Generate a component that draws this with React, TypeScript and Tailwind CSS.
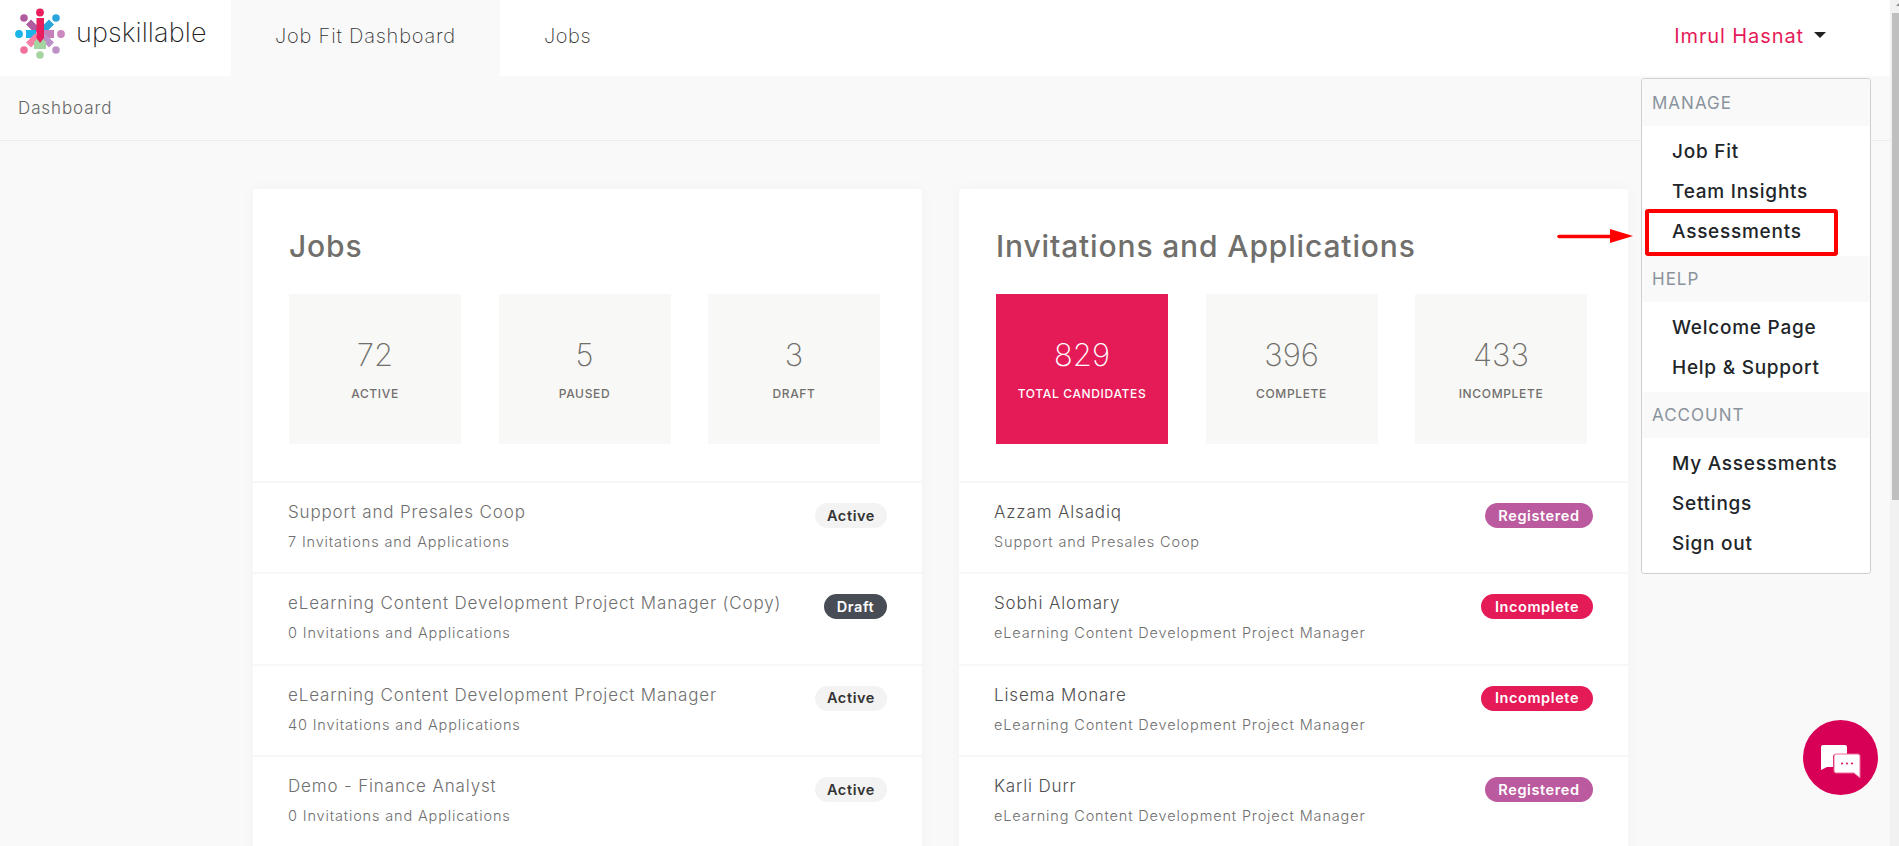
import React from 'react'

const font = { fontFamily: 'Inter, "Open Sans", sans-serif' }

interface RowProps {
  title: string
  sub: string
  badge: string
  dark?: boolean
}

const badgeStyles: Record<string, string> = {
  Active: 'bg-[#f3f3f3] text-[#333333] w-[72px]',
  Draft: 'bg-[#484d55] text-white w-[63px]',
  Registered: 'bg-[#bb5a9e] text-white w-[108px]',
  Incomplete: 'bg-[#e51b58] text-white w-[112px]',
}

const jobs: RowProps[] = [
  { title: 'Support and Presales Coop', sub: '7 Invitations and Applications', badge: 'Active' },
  { title: 'eLearning Content Development Project Manager (Copy)', sub: '0 Invitations and Applications', badge: 'Draft' },
  { title: 'eLearning Content Development Project Manager', sub: '40 Invitations and Applications', badge: 'Active' },
  { title: 'Demo - Finance Analyst', sub: '0 Invitations and Applications', badge: 'Active' },
]

const candidates: RowProps[] = [
  { title: 'Azzam Alsadiq', sub: 'Support and Presales Coop', badge: 'Registered' },
  { title: 'Sobhi Alomary', sub: 'eLearning Content Development Project Manager', badge: 'Incomplete' },
  { title: 'Lisema Monare', sub: 'eLearning Content Development Project Manager', badge: 'Incomplete' },
  { title: 'Karli Durr', sub: 'eLearning Content Development Project Manager', badge: 'Registered' },
]

// coordinates in the viewBox are page pixels
const Logo = () => (
  <svg width="52" height="52" viewBox="14 8 52 52" className="shrink-0">
    <circle cx="24" cy="18" r="3.8" fill="#b05ba0" />
    <circle cx="56" cy="18" r="3.8" fill="#2aa5dc" />
    <circle cx="19" cy="34" r="3.9" fill="#1ab3ea" />
    <circle cx="61" cy="34" r="3.9" fill="#cc88bf" />
    <circle cx="24" cy="50" r="3.8" fill="#f06f9c" />
    <circle cx="56" cy="50" r="3.8" fill="#bd92c8" />
    <circle cx="40" cy="55" r="3.8" fill="#a2d5a0" />
    <path d="M31 19.5L40 28.5L35 33.5L26 24.5z" fill="#b05ba0" />
    <path d="M49 19.5L54 24.5L45 33.5L40 28.5z" fill="#2aa5dc" />
    <path d="M26 30H36V38H26z" fill="#1ab3ea" />
    <path d="M44 30H54V38H44z" fill="#c67fb8" />
    <path d="M31 47.5L26 42.5L35 33.5L40 38.5z" fill="#f67fa6" />
    <path d="M49 47.5L54 42.5L45 33.5L40 38.5z" fill="#bd92c8" />
    <path d="M40 36L46 42V49H34V42z" fill="#a2d5a0" />
    <circle cx="40" cy="12.5" r="3.9" fill="#e91e5e" />
    <path d="M36.5 18H44V38L40 43L36.5 38z" fill="#e91e5e" />
  </svg>
)

const Tile = ({ value, label, active }: { value: string; label: string; active?: boolean }) => (
  <div className={`w-[172px] h-[150px] flex flex-col items-center pt-[45px] ${active ? 'bg-[#e51b58] text-white' : 'bg-[#f8f8f6] text-[#706f6c]'}`}>
    <div className="text-[31px] leading-[32px] font-extralight">{value}</div>
    <div className="mt-[15px] text-[12px] leading-[16px] font-medium tracking-[0.65px]">{label}</div>
  </div>
)

const Row = ({ title, sub, badge, dark }: RowProps) => (
  <div className="h-[91.33px] border-t-2 border-[#f7f7f7] flex justify-between pl-[35px] pr-[35px] pt-[18px]">
    <div>
      <div className={`text-[17px] leading-[22px] font-light tracking-[0.85px] ${dark ? 'text-[#4f4f4f]' : 'text-[#6f6f6f]'}`}>{title}</div>
      <div className="mt-[9px] text-[14.5px] leading-[20px] font-light tracking-[0.85px] text-[#6f6f6f]">{sub}</div>
    </div>
    <div className={`h-[25px] mt-[2px] rounded-full flex items-center justify-center text-[14.5px] font-semibold tracking-[0.6px] ${badgeStyles[badge]}`}>{badge}</div>
  </div>
)

const MenuHead = ({ label, h }: { label: string; h: string }) => (
  <div className={`${h} bg-[#f9f9f9] pl-[10px] pt-[2px] flex items-center text-[17px] font-normal tracking-[1px] text-[#8a939c]`}>{label}</div>
)

const MenuItem = ({ label }: { label: string }) => (
  <div className="h-10 pl-[30px] pt-[2px] flex items-center text-[19px] font-medium tracking-[0.75px] text-[#212529]">{label}</div>
)

export default function App() {
  return (
    <div style={font} className="h-screen flex overflow-hidden bg-[#f9f9f9]">
      <div className="relative flex-1 min-w-0">
        <nav className="h-[76px] bg-white flex">
          <div className="w-[231px] flex items-start pl-[14px] pt-[8px]">
            <Logo />
            <span className="ml-[10px] mt-[9px] text-[27px] leading-[32px] font-extralight tracking-[0.1px] text-[#222222]">upskillable</span>
          </div>
          <div className="w-[269px] bg-[#f9f9f9] flex items-center justify-center pb-[4px] text-[20px] font-extralight tracking-[0.8px] text-[#333333]">Job Fit Dashboard</div>
          <div className="ml-[44px] flex items-center pb-[4px] text-[20px] font-extralight tracking-[0.55px] text-[#333333]">Jobs</div>
          <div className="ml-auto mr-[64px] flex items-center gap-[10px] pb-[4px] text-[#e51b58] text-[20px] font-normal tracking-[0.9px]">
            Imrul Hasnat
            <span className="w-0 h-0 border-x-[6px] border-x-transparent border-t-[6px] border-t-[#222222] -mt-[2px]" />
          </div>
        </nav>
        <div className="h-[65px] border-b border-[#ececec] pl-[18px] pt-[2px] flex items-center text-[17px] font-light tracking-[0.9px] text-[#666666]">Dashboard</div>
        <div className="pl-[253px] pt-[48px] flex gap-[37px]">
          <div className="w-[669px] bg-white rounded-[3px] shadow-[0_0_16px_rgba(0,0,0,0.03)] pb-[40px]">
            <div className="pl-[36px] pr-[42px] pt-[38px] h-[292px]">
              <h2 className="text-[30px] leading-[38px] font-medium tracking-[0.85px] text-[#706f6c]">Jobs</h2>
              <div className="mt-[29px] flex justify-between">
                <Tile value="72" label="ACTIVE" />
                <Tile value="5" label="PAUSED" />
                <Tile value="3" label="DRAFT" />
              </div>
            </div>
            {jobs.map((j) => <Row key={j.title} {...j} />)}
          </div>
          <div className="w-[669px] bg-white rounded-[3px] shadow-[0_0_16px_rgba(0,0,0,0.03)] pb-[40px]">
            <div className="pl-[37px] pr-[41px] pt-[38px] h-[292px]">
              <h2 className="text-[30px] leading-[38px] font-medium tracking-[0.85px] text-[#706f6c]">Invitations and Applications</h2>
              <div className="mt-[29px] flex justify-between">
                <Tile value="829" label="TOTAL CANDIDATES" active />
                <Tile value="396" label="COMPLETE" />
                <Tile value="433" label="INCOMPLETE" />
              </div>
            </div>
            {candidates.map((c) => <Row key={c.title} {...c} dark />)}
          </div>
        </div>

        {/* dropdown menu */}
        <div className="absolute left-[1641px] top-[78px] w-[230px] bg-white border border-[#cfcfcf] rounded-[3px] overflow-hidden">
          <MenuHead label="MANAGE" h="h-[47px]" />
          <div className="py-[5px]">
            <MenuItem label="Job Fit" />
            <MenuItem label="Team Insights" />
            <MenuItem label="Assessments" />
          </div>
          <MenuHead label="HELP" h="h-[46px]" />
          <div className="py-[5px]">
            <MenuItem label="Welcome Page" />
            <MenuItem label="Help & Support" />
          </div>
          <MenuHead label="ACCOUNT" h="h-[46px]" />
          <div className="pt-[5px] pb-[10px]">
            <MenuItem label="My Assessments" />
            <MenuItem label="Settings" />
            <MenuItem label="Sign out" />
          </div>
        </div>

        {/* annotation */}
        <div className="absolute left-[1645px] top-[209px] w-[193px] h-[47px] border-[4px] border-[#ff0000] rounded-[3px]" />
        <svg className="absolute left-[1557px] top-[226px]" width="78" height="20" viewBox="0 0 78 20">
          <path d="M2 10.5H56" stroke="#ff0000" strokeWidth="3.5" strokeLinecap="round" />
          <path d="M53 3L76 10L53 17z" fill="#ff0000" />
        </svg>

        {/* chat bubble */}
        <div className="absolute left-[1803px] top-[720px] w-[75px] h-[75px] rounded-full bg-[#d80056] flex items-center justify-center">
          <svg width="40" height="34" viewBox="0 0 40 34" className="mt-[8px]">
            <path d="M2 0H24a2 2 0 0 1 2 2v7H15a3 3 0 0 0-3 3v10H6L0 25V2a2 2 0 0 1 2-2z" fill="#fff" />
            <path d="M15 9H37a2 2 0 0 1 2 2v22l-6-5H15a2 2 0 0 1-2-2V11a2 2 0 0 1 2-2z" fill="#fff" stroke="#f06a9c" strokeWidth="1" />
            <circle cx="21" cy="18.5" r="1" fill="#d80056" />
            <circle cx="26" cy="18.5" r="1" fill="#d80056" />
            <circle cx="31" cy="18.5" r="1" fill="#d80056" />
          </svg>
        </div>
      </div>

      {/* page scrollbar */}
      <div className="w-[9px] shrink-0 bg-[#f1f1f1] pl-[2px]">
        <div className="h-[13px] flex justify-end pt-[3px]">
          <span className="w-0 h-0 border-l-[3px] border-l-transparent border-b-[3px] border-b-[#8a8a8a]" />
        </div>
        <div className="h-[487px] bg-[#bfbfbf]" />
      </div>
    </div>
  )
}
